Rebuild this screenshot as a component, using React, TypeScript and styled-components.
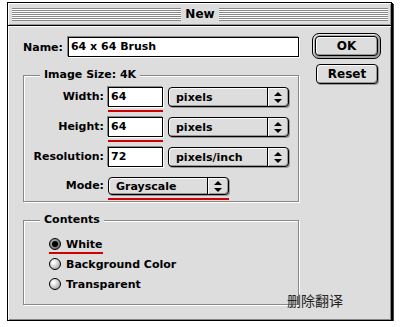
import styled, { createGlobalStyle } from "styled-components";

const GlobalStyle = createGlobalStyle`
  html, body {
    margin: 0;
    padding: 0;
    background: #ffffff;
  }
  body {
    font-family: "DejaVu Sans", "Liberation Sans", sans-serif;
    font-size: 11px;
    font-weight: bold;
    color: #000;
  }
`;

const Window = styled.div`
  width: 385px;
  height: 319px;
  margin: 2px 0 0 7px;
  box-sizing: border-box;
  border: 1px solid #000;
  box-shadow: 1px 1px 0 #000, 2px 2px 0 #444;
  display: flex;
  flex-direction: column;
  background: #dddddd;
`;

const TitleBar = styled.div`
  height: 22px;
  border-bottom: 1px solid #000;
  display: flex;
  align-items: center;
  padding: 0 3px 0 4px;
  gap: 3px;
  background: #dddddd;
  box-shadow: inset 1px 1px 0 #fff, inset -1px -1px 0 #999;
`;

const Stripes = styled.div`
  flex: 1;
  height: 13px;
  background: repeating-linear-gradient(
    to bottom,
    #888 0 1px,
    #fff 1px 2px
  );
`;

const Title = styled.div`
  font-size: 12px;
  line-height: 14px;
  padding: 0 1px;
`;

const Body = styled.div`
  position: relative;
  flex: 1;
  display: flex;
  align-items: flex-start;
  padding: 7px 0 0 15px;
  box-shadow: inset 1px 1px 0 #fff, inset -1px -1px 0 #888;
`;

const LeftColumn = styled.div`
  width: 276px;
  padding-top: 4px;
  display: flex;
  flex-direction: column;
`;

const RightColumn = styled.div`
  margin-left: 13px;
  display: flex;
  flex-direction: column;
  gap: 5px;
`;

const NameRow = styled.div`
  display: flex;
  align-items: center;
  height: 20px;
  gap: 5px;
`;

const TextInput = styled.div<{ $width?: number }>`
  box-sizing: border-box;
  height: 20px;
  width: ${(p) => (p.$width ? `${p.$width}px` : "auto")};
  flex: ${(p) => (p.$width ? "none" : 1)};
  background: #fff;
  border: 1px solid #000;
  box-shadow: -1px -1px 0 #888, 1px 1px 0 #fff;
  padding-left: 2px;
  line-height: 18px;
  font-size: 11px;
  white-space: nowrap;
`;

const Group = styled.div<{ $height: number; $mt: number }>`
  position: relative;
  box-sizing: border-box;
  height: ${(p) => p.$height}px;
  margin-top: ${(p) => p.$mt}px;
  border: 1px solid #888;
  box-shadow: 1px 1px 0 #fff, inset 1px 1px 0 #fff;
`;

const Legend = styled.div`
  position: absolute;
  top: -8px;
  left: 16px;
  padding: 0 4px;
  background: #dddddd;
  font-size: 11px;
  line-height: 14px;
`;

const Rows = styled.div`
  display: flex;
  flex-direction: column;
  gap: 5px;
  padding-top: 11px;
`;

const FieldRow = styled.div`
  display: flex;
  align-items: flex-start;
  gap: 4px;
`;

const Label = styled.div<{ $h?: number }>`
  width: 80px;
  height: ${(p) => p.$h ?? 20}px;
  line-height: ${(p) => p.$h ?? 20}px;
  text-align: right;
  white-space: nowrap;
`;

const Underlined = styled.div<{ $on: boolean }>`
  padding-bottom: 3px;
  border-bottom: 2px solid ${(p) => (p.$on ? "#d00000" : "transparent")};
`;

const Popup = styled.div<{ $width: number; $h?: number }>`
  box-sizing: border-box;
  width: ${(p) => p.$width}px;
  height: ${(p) => p.$h ?? 20}px;
  border: 1px solid #000;
  border-radius: 4px;
  background: #dddddd;
  box-shadow: inset 1px 1px 0 #fff, inset -1px -1px 0 #999, 1px 1px 0 #999;
  display: flex;
  align-items: stretch;
`;

const PopupText = styled.div`
  flex: 1;
  padding-left: 7px;
  display: flex;
  align-items: center;
  white-space: nowrap;
`;

const PopupArrow = styled.div`
  width: 20px;
  border-left: 1px solid #000;
  box-shadow: inset 1px 0 0 #fff;
  display: flex;
  align-items: center;
  justify-content: center;
`;

const PopupSpacer = styled.div`
  margin-left: 1px;
`;

const RadioList = styled.div`
  display: flex;
  flex-direction: column;
  gap: 2px;
  padding: 15px 0 0 25px;
`;

const RadioRow = styled.div<{ $on: boolean }>`
  display: flex;
  align-items: center;
  gap: 5px;
  height: 16px;
  width: fit-content;
  padding-right: 1px;
  border-bottom: 2px solid ${(p) => (p.$on ? "#d00000" : "transparent")};
`;

const Radio = styled.div<{ $checked: boolean }>`
  position: relative;
  box-sizing: border-box;
  width: 12px;
  height: 12px;
  border-radius: 50%;
  border: 1px solid #000;
  background: ${(p) =>
    p.$checked
      ? "radial-gradient(circle at 35% 35%, #bbb, #555)"
      : "radial-gradient(circle at 35% 35%, #fff 10%, #999 90%)"};
  &::after {
    content: "";
    display: ${(p) => (p.$checked ? "block" : "none")};
    position: absolute;
    left: 2px;
    top: 2px;
    width: 6px;
    height: 6px;
    border-radius: 50%;
    background: #000;
  }
`;

const DefaultRing = styled.div`
  box-sizing: border-box;
  width: 69px;
  height: 26px;
  border: 1px solid #000;
  border-radius: 7px;
  padding: 2px;
  background: #aaa;
  box-shadow: inset 1px 1px 0 #eee;
`;

const Button = styled.div<{ $width?: number }>`
  box-sizing: border-box;
  width: ${(p) => (p.$width ? `${p.$width}px` : "100%")};
  height: ${(p) => (p.$width ? "20px" : "100%")};
  border: 1px solid #000;
  border-radius: 4px;
  background: #dddddd;
  box-shadow: inset 1px 1px 0 #fff, inset -1px -1px 0 #999, 1px 1px 0 #999;
  display: flex;
  align-items: center;
  justify-content: center;
  font-size: 12px;
`;

const ResetWrap = styled.div`
  padding-left: 4px;
`;

const Overlay = styled.div`
  position: absolute;
  left: 279px;
  top: 267px;
  font-family: "Noto Sans CJK SC", sans-serif;
  font-weight: normal;
  font-size: 14px;
  line-height: 14px;
  color: #222;
`;

const Arrows = () => (
  <svg width="8" height="11" viewBox="0 0 8 11">
    <path d="M4 0 L8 4 L0 4 Z" fill="#000" />
    <path d="M0 7 L8 7 L4 11 Z" fill="#000" />
  </svg>
);

type Row = {
  label: string;
  value: string;
  unit: string;
  marked: boolean;
};

const sizeRows: Row[] = [
  { label: "Width:", value: "64", unit: "pixels", marked: true },
  { label: "Height:", value: "64", unit: "pixels", marked: true },
  { label: "Resolution:", value: "72", unit: "pixels/inch", marked: false },
];

const contents = [
  { label: "White", checked: true },
  { label: "Background Color", checked: false },
  { label: "Transparent", checked: false },
];

const App = () => {
  return (
    <>
      <GlobalStyle />
      <Window>
        <TitleBar>
          <Stripes />
          <Title>New</Title>
          <Stripes />
        </TitleBar>
        <Body>
          <LeftColumn>
            <NameRow>
              <div>Name:</div>
              <TextInput>64 x 64 Brush</TextInput>
            </NameRow>
            <Group $height={127} $mt={18}>
              <Legend>Image Size: 4K</Legend>
              <Rows>
                {sizeRows.map((row) => (
                  <FieldRow key={row.label}>
                    <Label>{row.label}</Label>
                    <Underlined $on={row.marked}>
                      <TextInput $width={55}>{row.value}</TextInput>
                    </Underlined>
                    <PopupSpacer>
                      <Popup $width={121}>
                        <PopupText>{row.unit}</PopupText>
                        <PopupArrow>
                          <Arrows />
                        </PopupArrow>
                      </Popup>
                    </PopupSpacer>
                  </FieldRow>
                ))}
                <FieldRow>
                  <Label $h={18}>Mode:</Label>
                  <Underlined $on>
                    <Popup $width={121} $h={18}>
                      <PopupText>Grayscale</PopupText>
                      <PopupArrow>
                        <Arrows />
                      </PopupArrow>
                    </Popup>
                  </Underlined>
                </FieldRow>
              </Rows>
            </Group>
            <Group $height={85} $mt={18}>
              <Legend>Contents</Legend>
              <RadioList>
                {contents.map((c) => (
                  <RadioRow key={c.label} $on={c.checked}>
                    <Radio $checked={c.checked} />
                    <span>{c.label}</span>
                  </RadioRow>
                ))}
              </RadioList>
            </Group>
          </LeftColumn>
          <RightColumn>
            <DefaultRing>
              <Button>OK</Button>
            </DefaultRing>
            <ResetWrap>
              <Button $width={62}>Reset</Button>
            </ResetWrap>
          </RightColumn>
          <Overlay>删除翻译</Overlay>
        </Body>
      </Window>
    </>
  );
};

export default App;
